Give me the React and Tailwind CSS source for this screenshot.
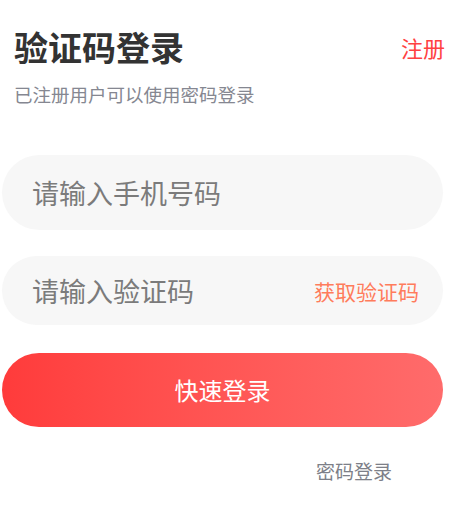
import React from "react";

const FONT = { fontFamily: '"Noto Sans CJK SC", "Noto Sans", sans-serif' };

export default function App() {
  return (
    <div className="w-[475px] h-[505px] bg-white overflow-hidden" style={FONT}>
      <div className="ml-[2px] w-[441px]">
        {/* header */}
        <div className="mt-[30px] flex items-center justify-between pl-[12px] -mr-[2px]">
          <h1 className="text-[34px] leading-[34px] font-bold text-[#333333]">验证码登录</h1>
          <span className="text-[22px] leading-[22px] text-[#ff4141]">注册</span>
        </div>
        <p className="mt-[20px] pl-[12px] text-[18.5px] leading-[20px] text-[#858791]">
          已注册用户可以使用密码登录
        </p>

        {/* phone */}
        <div className="mt-[51px] h-[75px] rounded-full bg-[#f7f7f7] flex items-center pl-[30px]">
          <input
            className="w-full bg-transparent outline-none text-[27px] leading-[27px] placeholder:text-[#7b7b7b]"
            placeholder="请输入手机号码"
          />
        </div>

        {/* code */}
        <div className="mt-[26px] h-[69px] rounded-full bg-[#f7f7f7] flex items-center pl-[30px] pr-[24px]">
          <input
            className="flex-1 min-w-0 bg-transparent outline-none text-[27px] leading-[27px] placeholder:text-[#7b7b7b]"
            placeholder="请输入验证码"
          />
          <button className="text-[21px] leading-[21px] text-[#ff7c5c] mt-[2px]">获取验证码</button>
        </div>

        {/* submit */}
        <button className="mt-[28px] w-full h-[74px] rounded-full bg-gradient-to-r from-[#ff3b3b] to-[#ff6b6b] text-white text-[24px] leading-[24px] flex items-center justify-center">
          快速登录
        </button>

        <div className="mt-[34px] flex justify-end pr-[51px]">
          <span className="text-[19px] leading-[19px] text-[#7d7f88]">密码登录</span>
        </div>
      </div>
    </div>
  );
}
